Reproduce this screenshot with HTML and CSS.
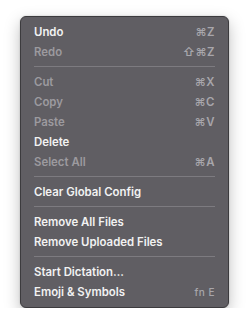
FILE: index.html
```html
<!DOCTYPE html>
<html lang="en">
<head>
    <meta charset="UTF-8">
    <title>Edit Menu</title>
    <link rel="stylesheet" href="styles.css">
</head>
<body>

<div class="menu">
    <div class="item"><span>Undo</span><span class="key">⌘Z</span></div>
    <div class="item disabled"><span>Redo</span><span class="key">⇧⌘Z</span></div>
    <div class="sep"></div>
    <div class="item disabled"><span>Cut</span><span class="key">⌘X</span></div>
    <div class="item disabled"><span>Copy</span><span class="key">⌘C</span></div>
    <div class="item disabled"><span>Paste</span><span class="key">⌘V</span></div>
    <div class="item"><span>Delete</span></div>
    <div class="item disabled"><span>Select All</span><span class="key">⌘A</span></div>
    <div class="sep"></div>
    <div class="item"><span>Clear Global Config</span></div>
    <div class="sep"></div>
    <div class="item"><span>Remove All Files</span></div>
    <div class="item"><span>Remove Uploaded Files</span></div>
    <div class="sep"></div>
    <div class="item"><span>Start Dictation…</span></div>
    <div class="item"><span>Emoji &amp; Symbols</span><span class="key fn">fn E</span></div>
</div>

</body>
</html>
```

FILE: styles.css
```css
body {
    margin: 0;
    background-color: #fff;
    font-family: Inter, "Liberation Sans", sans-serif;
    padding: 16px 0 0 20px;
}
.menu {
    width: 209px;
    box-sizing: border-box;
    padding: 5px 13px 5px 13px;
    background-color: #605e63;
    border: 1px solid #3c3b3e;
    border-radius: 6px;
    box-shadow: 0 6px 16px rgba(0, 0, 0, 0.25), 0 0 2px rgba(0, 0, 0, 0.2);
}
.item {
    display: flex;
    justify-content: space-between;
    align-items: center;
    height: 20px;
    font-size: 11.4px;
    font-weight: 600;
    color: #f2f2f2;
}
.item.disabled {
    color: #9c9a9f;
}
.key {
    color: #a8a6ab;
    letter-spacing: 0.5px;
}
.key.fn {
    font-size: 10px;
    font-weight: 500;
}
.sep {
    height: 1px;
    margin: 4px 0 5px;
    background-color: #7d7b80;
}
```
